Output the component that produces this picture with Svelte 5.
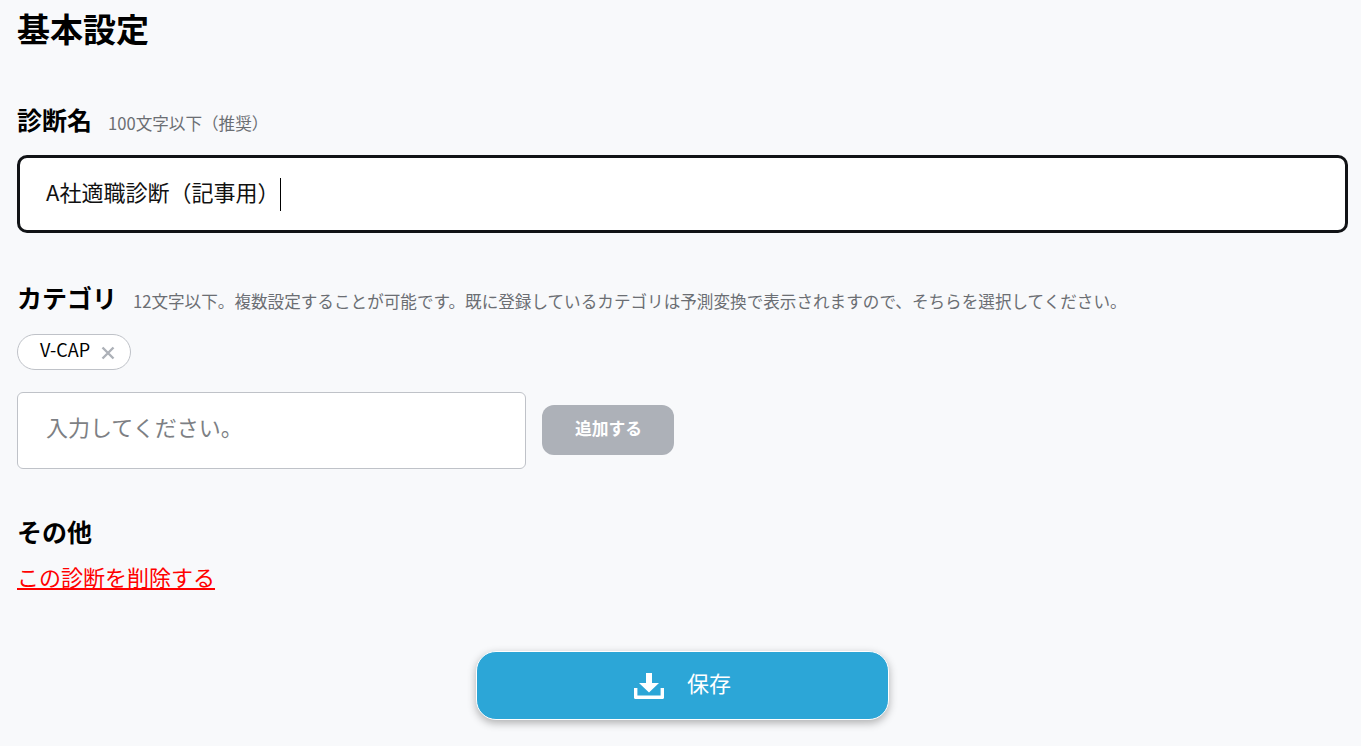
<script>
  let tags = ['V-CAP'];
</script>

<main class="page">
  <h1>基本設定</h1>

  <section class="name">
    <div class="head">
      <h2>診断名</h2>
      <span class="hint">100文字以下（推奨）</span>
    </div>
    <div class="focused" role="textbox" tabindex="-1">
      <span class="value">A社適職診断（記事用）</span><i class="caret"></i>
    </div>
  </section>

  <section class="category">
    <div class="head">
      <h2>カテゴリ</h2>
      <span class="hint">12文字以下。複数設定することが可能です。既に登録しているカテゴリは予測変換で表示されますので、そちらを選択してください。</span>
    </div>
    <div class="tags">
      {#each tags as tag}
        <span class="tag">
          <span class="tag-label">{tag}</span>
          <svg width="14" height="14" viewBox="0 0 14 14" aria-hidden="true">
            <path d="M1.5 1.5 12.5 12.5M12.5 1.5 1.5 12.5" stroke="#adb1b8" stroke-width="2.4" fill="none" />
          </svg>
        </span>
      {/each}
    </div>
    <div class="add-row">
      <input class="add-input" placeholder="入力してください。" />
      <button class="add-btn">追加する</button>
    </div>
  </section>

  <section class="other">
    <h2>その他</h2>
    <a class="danger" href="#delete">この診断を削除する</a>
  </section>

  <div class="save-wrap">
    <button class="save">
      <svg width="30" height="26" viewBox="0 0 30 26" aria-hidden="true">
        <path fill="#fff" d="M12 0h6v10h7l-10 9.5L5 10h7z" />
        <path fill="#fff" d="M0 15h3.4v7.5h23.2V15H30v9.8c0 .7-.5 1.2-1.2 1.2H1.2C.5 26 0 25.500 0 24.800z" />
      </svg>
      <span class="save-label">保存</span>
    </button>
  </div>
</main>

<style>
  :global(body) {
    background: #f8f9fb;
    font-family: "Noto Sans CJK JP", "Noto Sans", sans-serif;
    color: #000;
  }
  .page {
    padding: 8px 13px 0 17px;
    box-sizing: border-box;
    height: 746px;
    overflow: hidden;
  }
  h1 {
    margin: 0;
    font-size: 33px;
    line-height: 40px;
    font-weight: 700;
  }
  h2 {
    margin: 0;
    font-size: 25px;
    line-height: 36px;
    font-weight: 700;
  }
  .head {
    display: flex;
    align-items: center;
    gap: 16px;
  }
  .hint {
    font-size: 16.6px;
    line-height: 24px;
    color: #6b6e73;
    margin-top: 8px;
  }
  .name {
    margin-top: 53px;
  }
  .focused {
    margin-top: 18px;
    height: 78px;
    box-sizing: border-box;
    border: 3px solid #111316;
    border-radius: 10px;
    background: #fff;
    padding: 0 26px;
    display: flex;
    align-items: center;
    font-size: 22px;
    color: #111;
  }
  .value {
    margin-top: -6px;
  }
  .caret {
    width: 1px;
    height: 33px;
    background: #000;
    margin-left: 1px;
  }
  .category {
    margin-top: 46px;
  }
  .tags {
    margin-top: 19px;
    display: flex;
  }
  .tag {
    height: 36px;
    box-sizing: border-box;
    border: 1px solid #bfc2c8;
    border-radius: 18px;
    background: #fff;
    padding: 0 15px 0 22px;
    display: flex;
    align-items: center;
    gap: 11px;
    font-size: 18px;
  }
  .tag-label {
    margin-top: -6px;
  }
  .tag svg {
    margin-top: 2px;
  }
  .add-row {
    margin-top: 22px;
    display: flex;
    align-items: center;
    gap: 16px;
  }
  .add-input {
    width: 509px;
    height: 77px;
    box-sizing: border-box;
    border: 1px solid #bfc2c8;
    border-radius: 6px;
    background: #fff;
    padding: 0 28px 9px;
    font: inherit;
    font-size: 22px;
    outline: none;
  }
  .add-input::placeholder {
    color: #7d7f84;
    opacity: 1;
  }
  .add-btn {
    width: 132px;
    height: 50px;
    margin-bottom: 1px;
    border: none;
    border-radius: 12px;
    background: #adb1b8;
    color: #fff;
    font: inherit;
    font-size: 16.8px;
    font-weight: 700;
    padding: 0 0 4px 1px;
  }
  .other {
    margin-top: 44px;
  }
  .danger {
    display: inline-block;
    margin-top: 12px;
    font-size: 22px;
    line-height: 30px;
    color: #ff0000;
    text-decoration: underline;
  }
  .save-wrap {
    margin-top: 60px;
    display: flex;
    justify-content: center;
  }
  .save {
    width: 413px;
    height: 69px;
    box-sizing: border-box;
    border: 1px solid #fff;
    border-radius: 20px;
    background: #2ca6d7;
    color: #fff;
    font: inherit;
    font-size: 22px;
    display: flex;
    align-items: center;
    justify-content: center;
    gap: 23px;
    padding: 0;
    box-shadow: 0 3px 8px rgba(0, 0, 0, 0.3);
  }
  .save-label {
    margin-top: -7px;
  }
</style>
